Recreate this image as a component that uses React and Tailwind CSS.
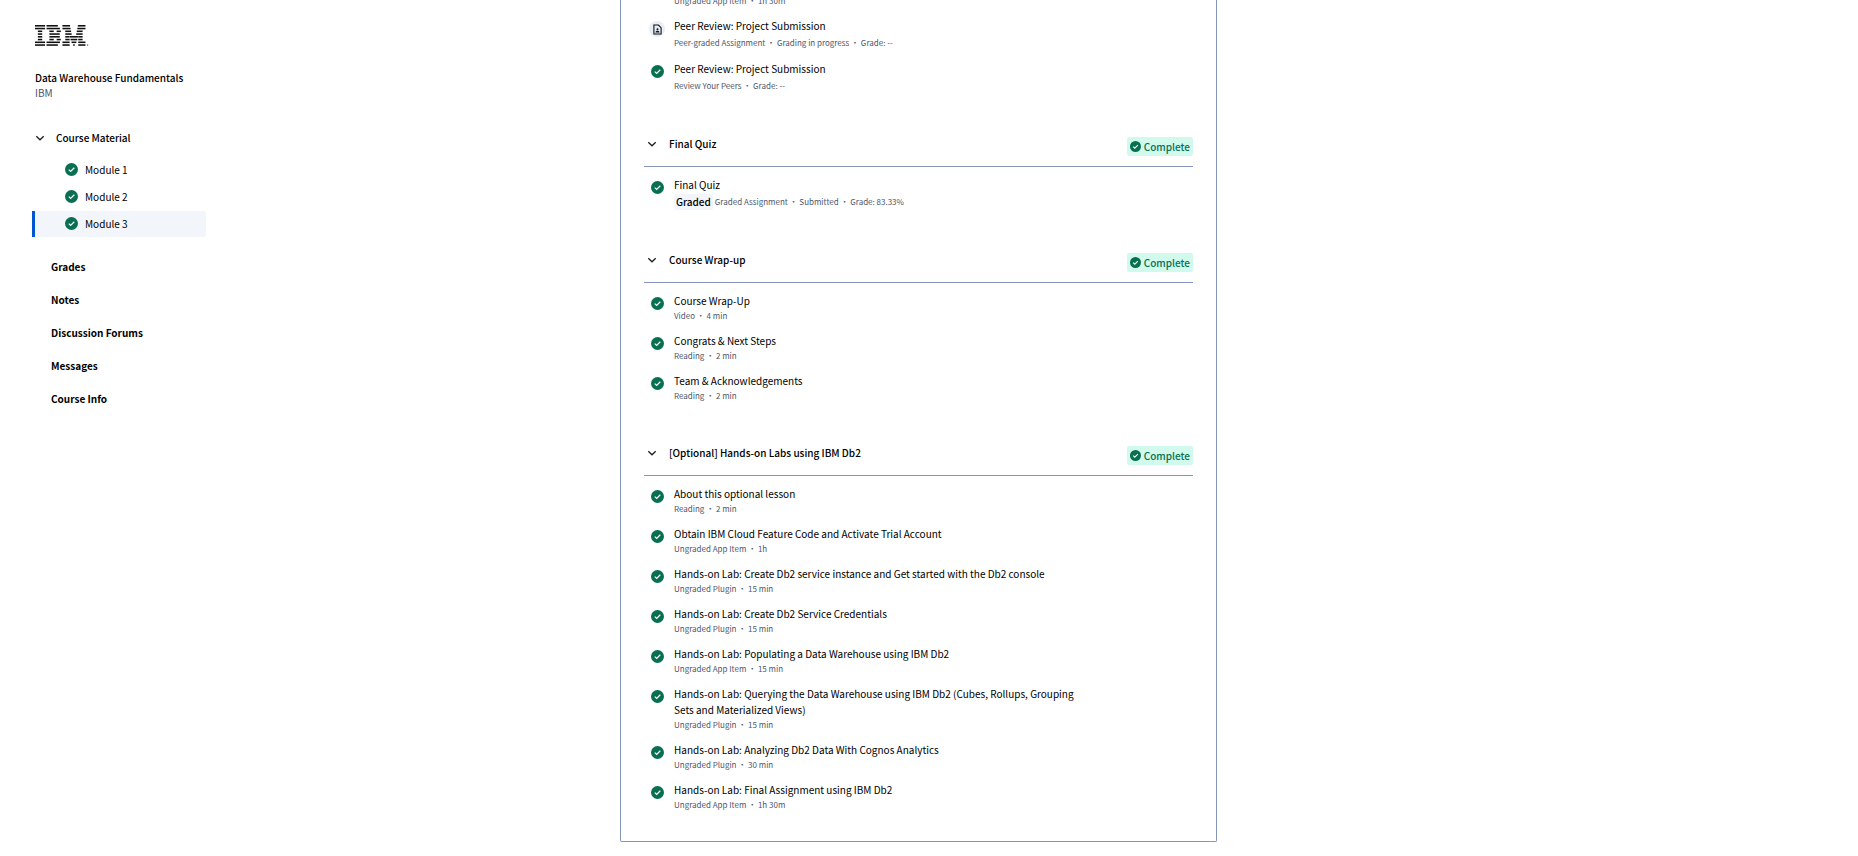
const modules = ["Module 1", "Module 2", "Module 3"];
const links = ["Grades", "Notes", "Discussion Forums", "Messages", "Course Info"];

const peerReviews = [
  {
    title: "Peer Review: Project Submission",
    meta: ["Peer-graded Assignment", "Grading in progress", "Grade: --"],
    tall: true,
    pending: true,
  },
  { title: "Peer Review: Project Submission", meta: ["Review Your Peers", "Grade: --"], tall: true },
];

const sections = [
  {
    name: "Final Quiz",
    items: [
      {
        title: "Final Quiz",
        meta: ["Graded Assignment", "Submitted", "Grade: 83.33%"],
        tall: true,
        graded: true,
      },
    ],
  },
  {
    name: "Course Wrap-up",
    items: [
      { title: "Course Wrap-Up", meta: ["Video", "4 min"] },
      { title: "Congrats & Next Steps", meta: ["Reading", "2 min"] },
      { title: "Team & Acknowledgements", meta: ["Reading", "2 min"] },
    ],
  },
  {
    name: "[Optional] Hands-on Labs using IBM Db2",
    items: [
      { title: "About this optional lesson", meta: ["Reading", "2 min"] },
      { title: "Obtain IBM Cloud Feature Code and Activate Trial Account", meta: ["Ungraded App Item", "1h"] },
      {
        title: "Hands-on Lab: Create Db2 service instance and Get started with the Db2 console",
        meta: ["Ungraded Plugin", "15 min"],
      },
      { title: "Hands-on Lab: Create Db2 Service Credentials", meta: ["Ungraded Plugin", "15 min"] },
      { title: "Hands-on Lab: Populating a Data Warehouse using IBM Db2", meta: ["Ungraded App Item", "15 min"] },
      {
        title:
          "Hands-on Lab: Querying the Data Warehouse using IBM Db2 (Cubes, Rollups, Grouping Sets and Materialized Views)",
        meta: ["Ungraded Plugin", "15 min"],
      },
      { title: "Hands-on Lab: Analyzing Db2 Data With Cognos Analytics", meta: ["Ungraded Plugin", "30 min"] },
      { title: "Hands-on Lab: Final Assignment using IBM Db2", meta: ["Ungraded App Item", "1h 30m"] },
    ],
  },
];

// Horizontal spans of each of the eight stripes, as [start, end] pairs.
const logoStripes = [
  [[0, 194], [222, 440], [528, 675], [825, 972]],
  [[0, 194], [222, 480], [528, 685], [815, 972]],
  [[55, 139], [277, 361], [417, 497], [583, 695], [805, 917]],
  [[55, 139], [277, 477], [583, 706], [794, 917]],
  [[55, 139], [277, 477], [583, 667], [673, 827], [833, 917]],
  [[55, 139], [277, 361], [417, 497], [583, 667], [684, 816], [833, 917]],
  [[0, 194], [222, 480], [528, 667], [704, 796], [833, 972]],
  [[0, 194], [222, 440], [528, 667], [735, 765], [833, 972]],
];

function IbmLogo() {
  return (
    <svg viewBox="0 0 1040 404" className="h-[21px] w-[54px]" role="img" aria-label="IBM" fill="#111">
      {logoStripes.map((row, y) =>
        row.map(([a, b]) => <rect key={`${y}-${a}`} x={a} y={y * 53} width={b - a} height="30" />)
      )}
      <circle cx="1012" cy="386" r="16" fill="#777" />
    </svg>
  );
}

function Check({ className = "size-[13px]" }) {
  return (
    <svg viewBox="0 0 20 20" className={`shrink-0 ${className}`} aria-hidden="true">
      <circle cx="10" cy="10" r="10" fill="#087051" />
      <path d="M5.8 10.2l2.9 2.8 5.6-5.6" fill="none" stroke="#fff" strokeWidth="1.9" />
    </svg>
  );
}

function Chevron() {
  return (
    <svg viewBox="0 0 10 10" className="size-[10px] shrink-0" aria-hidden="true">
      <path d="M1.3 3.2L5 6.8l3.7-3.6" fill="none" stroke="#1f1f1f" strokeWidth="1.3" />
    </svg>
  );
}

function PeerIcon() {
  return (
    <span className="flex size-4 items-center justify-center rounded-full bg-[#e8eef7]">
      <svg viewBox="0 0 10 12" className="h-[11px] w-[9px]" aria-hidden="true">
        <path d="M1 1h5l3 3v7H1z" fill="none" stroke="#0f1114" strokeWidth="1.2" />
        <circle cx="5" cy="5.8" r="1.1" fill="#0f1114" />
        <path d="M2.7 9.2c0-2.4 4.6-2.4 4.6 0z" fill="#0f1114" />
      </svg>
    </span>
  );
}

function Meta({ parts, tall, graded }) {
  return (
    <p className={`flex items-center text-[8px] text-[#4c566c] ${tall ? "h-[17px]" : "h-[14px]"}`}>
      {graded && (
        <span className="mr-[2px] rounded-xs bg-[#f2f5fa] px-[2px] text-[10px] leading-4 font-medium text-black">
          Graded
        </span>
      )}
      {parts.join(" • ")}
    </p>
  );
}

function Item({ item }) {
  return (
    <li className="flex gap-[9px] pl-[5px]">
      <span className={`flex h-4 w-4 items-center justify-center ${item.pending ? "mt-[3px]" : "mt-[2px]"}`}>
        {item.pending ? <PeerIcon /> : <Check />}
      </span>
      <div className="max-w-[410px]">
        <a href="#item" className="block text-[10px] leading-4 text-black">
          {item.title}
        </a>
        <Meta parts={item.meta} tall={item.tall} graded={item.graded} />
      </div>
    </li>
  );
}

function Section({ section }) {
  return (
    <section className="mt-[43px]">
      <header className="flex items-start justify-between border-b border-[#8495b9] pb-[10px]">
        <button type="button" aria-expanded="true" className="flex items-center gap-3 pl-[3px]">
          <Chevron />
          <span className="text-[10px] leading-[14px] font-medium text-black">{section.name}</span>
        </button>
        <span className="flex h-[19px] items-center gap-[3px] rounded-xs bg-[#d1f9ec] px-[3px] text-[10px] font-medium text-[#087051]">
          <Check className="size-[11px]" />
          Complete
        </span>
      </header>
      <ul className="mt-[10px] flex flex-col gap-[10px]">
        {section.items.map((item) => (
          <Item key={item.title} item={item} />
        ))}
      </ul>
    </section>
  );
}

export default function App() {
  return (
    <div className="grid min-h-screen grid-cols-[1fr_minmax(0,597px)_1fr] items-start overflow-hidden bg-white pr-[21px] font-['Noto_Sans_CJK_SC',sans-serif] text-black">
      <aside className="pt-[25px] pl-8">
        <div className="pl-[3px]">
          <IbmLogo />
          <h1 className="mt-6 text-[10px] leading-4 font-medium">Data Warehouse Fundamentals</h1>
          <p className="text-[10px] leading-[14px] text-[#4c566c]">IBM</p>
          <button type="button" aria-expanded="true" className="mt-[30px] flex items-center gap-[11px]">
            <Chevron />
            <span className="text-[10px] leading-4 font-medium">Course Material</span>
          </button>
        </div>
        <nav className="w-[174px]">
          <ul className="mt-[11px] flex flex-col gap-px">
            {modules.map((name, i) => (
              <li key={name}>
                <a
                  href="#module"
                  className={`flex h-[26px] items-center gap-[7px] rounded-r-xs border-l-3 pb-px pl-[30px] text-[10px] ${
                    i === 2 ? "border-[#0056d2] bg-[#f2f5fa]" : "border-transparent"
                  }`}
                >
                  <Check />
                  {name}
                </a>
              </li>
            ))}
          </ul>
          <ul className="mt-[22px] flex flex-col gap-[17px] pl-[19px]">
            {links.map((name) => (
              <li key={name} className="h-4">
                <a href="#link" className="block text-[10px] leading-4 font-bold">
                  {name}
                </a>
              </li>
            ))}
          </ul>
        </nav>
      </aside>

      <main className="-mt-[6px] rounded-b-xs border border-t-0 border-[#8495b9] px-[23px] pb-[29px]">
        <div className="pl-[30px]">
          <Meta parts={["Ungraded App Item", "1h 30m"]} />
        </div>
        <ul className="mt-[10px] flex flex-col gap-[10px]">
          {peerReviews.map((item, i) => (
            <Item key={i} item={item} />
          ))}
        </ul>
        {sections.map((section) => (
          <Section key={section.name} section={section} />
        ))}
      </main>
    </div>
  );
}
